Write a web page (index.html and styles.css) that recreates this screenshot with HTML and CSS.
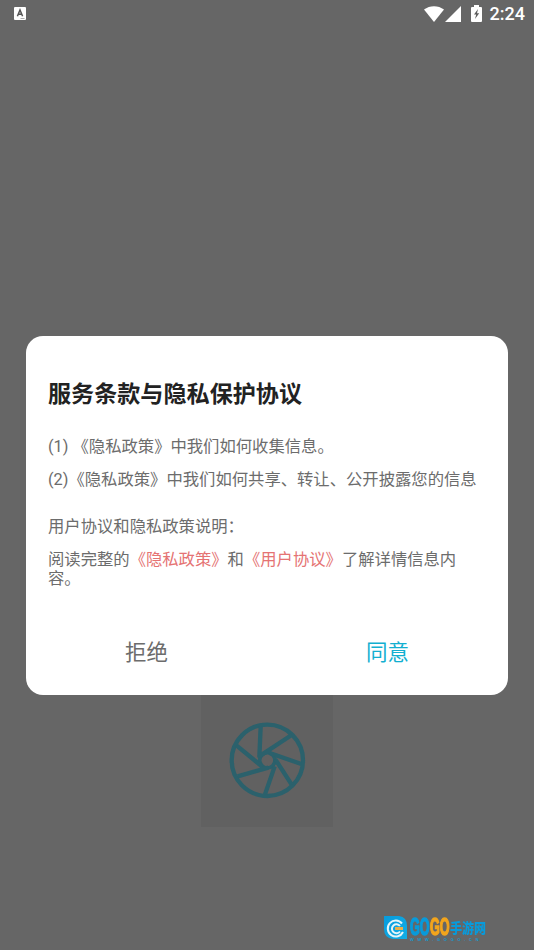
FILE: index.html
```html
<!DOCTYPE html>
<html lang="zh-CN">
<head>
<meta charset="utf-8">
<title>服务条款与隐私保护协议</title>
<link rel="stylesheet" href="styles.css">
</head>
<body>
<div class="screen">
  <header class="status">
    <svg class="status-app" viewBox="0 0 12 13"><rect width="12" height="13" rx="1" fill="#fff"/><path d="M3.4 9.2 6 3l2.6 6.2M4.4 7.3h3.2" fill="none" stroke="#555" stroke-width="1.5"/><path d="M6.5 11.5h4" stroke="#999" stroke-width=".8"/></svg>
    <div class="status-right">
      <svg class="wifi" viewBox="0 0 20 16"><path d="M0 3.600C5.800-.9 14.200-.9 20 3.600L10 16z" fill="#fff"/></svg>
      <svg class="signal" viewBox="0 0 16 16"><path d="M16 0v16H0z" fill="#fff"/></svg>
      <svg class="battery" viewBox="0 0 11 17"><path d="M3 0h5v2h2q1 0 1 1v13q0 1-1 1H1q-1 0-1-1V3q0-1 1-1h2z" fill="#fff"/><path d="M7 4 3 9.500h2.200L4 14l4.200-5.700H6z" fill="#5c5c5c"/></svg>
      <span class="time">2:24</span>
    </div>
  </header>
  <main class="dialog">
    <h1>服务条款与隐私保护协议</h1>
    <p class="item">(1) 《隐私政策》中我们如何收集信息。</p>
    <p class="item">(2)《隐私政策》中我们如何共享、转让、公开披露您的信息</p>
    <p class="note">用户协议和隐私政策说明：</p>
    <p class="item">阅读完整的<a>《隐私政策》</a>和<a>《用户协议》</a>了解详情信息内容。</p>
    <div class="actions">
      <button class="decline">拒绝</button>
      <button class="accept">同意</button>
    </div>
  </main>
  <div class="tile">
    <svg viewBox="32 30 396 396" fill="none" stroke="#2b616c" stroke-width="13">
      <circle cx="231" cy="226" r="107"/>
      <circle cx="231" cy="226" r="23" stroke-width="11"/>
      <path d="M211 124 207 218M304 150 210 212M333 237 238 204M304 299 255 223M224 328 253 244M142 274 234 248M139 182 217 246"/>
    </svg>
  </div>
  <footer class="watermark">
    <svg class="mark" viewBox="0 0 24 24">
      <defs><linearGradient id="blue" x2="1" y2="1"><stop stop-color="#079bdc"/><stop offset="1" stop-color="#12aee5"/></linearGradient></defs>
      <path d="M0 0h15q8 1 8 10v13H9Q0 22 0 13z" fill="url(#blue)"/>
      <path d="M18 7.500A8 8 0 1 0 19 16" fill="none" stroke="#e6f5f8" stroke-width="2"/>
      <path d="M16 10A4.500 4.500 0 1 0 16 15.500" fill="none" stroke="#e6f5f8" stroke-width="2"/>
      <path d="M11 12.500h8" stroke="#eab04a" stroke-width="3"/>
    </svg>
    <div class="wordmark">
      <div class="brand"><b class="go">GO</b><b class="go orange">GO</b><b class="cn">手游网</b></div>
      <div class="url">WWW.GOGO.CN</div>
    </div>
  </footer>
</div>
</body>
</html>
```
FILE: styles.css
```css
* { box-sizing: border-box; }
body { margin: 0; background: #666; font-family: Roboto, "Noto Sans CJK SC", sans-serif; }
.screen { width: 534px; height: 950px; display: flex; flex-direction: column; overflow: hidden; background: #666; }
.status { height: 336px; flex: none; display: flex; justify-content: space-between; align-items: flex-start; padding: 0 9px 0 14px; }
.status-app { width: 12px; height: 13px; margin-top: 7px; }
.status-right { height: 27px; display: flex; align-items: center; }
.wifi { width: 20px; height: 16px; }
.signal { width: 16px; height: 16px; margin-left: 1px; }
.battery { width: 11px; height: 17px; margin: 0 8px 0 10px; }
.time { color: #fff; font-size: 18px; font-weight: 500; line-height: 27px; }
.dialog { flex: none; width: 482px; height: 359px; margin: 0 26px; padding: 43px 22px 0; border-radius: 17px; background: #fff; color: #6c6c6c; }
h1 { margin: 0 0 26px; color: #222; font-size: 23.1px; line-height: 32px; font-weight: 700; white-space: nowrap; }
p { margin: 0; font-size: 16.33px; line-height: 19px; }
.item { margin-bottom: 14px; }
.note { margin: 28px 0 14px; }
.item a { color: #e57373; }
.actions { display: flex; margin: 49px -22px 0; }
.actions button { flex: 1; border: 0; padding: 0; background: none; font: 400 21.5px/32px Roboto, "Noto Sans CJK SC", sans-serif; }
.decline { color: #6c6c6c; }
.accept { color: #12afd0; }
.tile { flex: none; width: 132px; height: 132px; margin: 0 0 0 201px; background: #616161; }
.tile svg { display: block; width: 132px; height: 132px; filter: blur(.6px); }
.watermark { display: flex; gap: 3px; margin: 89px 0 0 384px; height: 26px; }
.mark { width: 24px; height: 24px; }
.wordmark { width: 76px; margin-left: -1px; }
.brand { display: flex; align-items: center; height: 21px; color: #079bdc; }
.go { width: 20px; font: 700 21px/21px "Liberation Sans", sans-serif; transform: scale(.6, 1.1); transform-origin: left; white-space: nowrap; -webkit-text-stroke: 1.4px currentColor; }
.orange { color: #f3a51c; }
.cn { font: 900 12px/20px "Noto Sans CJK SC", sans-serif; white-space: nowrap; transform: scaleY(1.15); }
.url { color: #129bd0; font: 700 4px/5px "Liberation Sans", sans-serif; letter-spacing: 3.7px; white-space: nowrap; }
```
